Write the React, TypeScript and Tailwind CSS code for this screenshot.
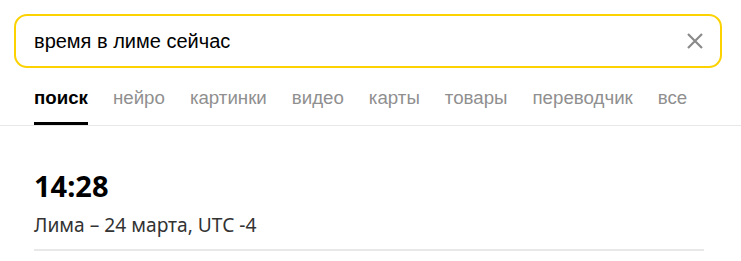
import React from "react";

const tabs = ["поиск", "нейро", "картинки", "видео", "карты", "товары", "переводчик", "все"];

export default function App() {
  return (
    <div className="w-[741px] h-[261px] bg-white overflow-hidden" style={{ fontFamily: '"Liberation Sans", Arial, sans-serif' }}>
      <div className="pt-[14px] px-[14px]">
        <div className="h-[54px] w-[708px] border-2 border-[#fcd200] rounded-[13px] flex items-center pl-[18px] pr-[16px]">
          <span className="flex-1 text-[20px] text-black leading-none">время в лиме сейчас</span>
          <svg width="18" height="18" viewBox="0 0 18 18">
            <path d="M2 2 L16 16 M16 2 L2 16" stroke="#8a8a8a" strokeWidth="2.2" fill="none" />
          </svg>
        </div>
      </div>
      <div className="mt-[16px] border-b border-[#e8e8e8] pl-[34px] flex gap-[25px]">
        {tabs.map((t, i) => (
          <div key={t} className={"h-[41px] flex items-start pt-[5px] text-[18.7px] leading-none " + (i === 0 ? "font-bold text-black border-b-[3px] border-black" : "text-[#8f8f8f]")}>
            {t}
          </div>
        ))}
      </div>
      <div className="pl-[34px] pr-[37px] pt-[45px]" style={{ fontFamily: '"Noto Sans", sans-serif' }}>
        <div className="text-[29px] font-bold leading-none text-black">14:28</div>
        <div className="mt-[15px] text-[19.2px] leading-none text-[#333]">Лима – 24 марта, UTC -4</div>
        <div className="mt-[15px] h-[2px] bg-[#e8e8e8]" />
      </div>
    </div>
  );
}
